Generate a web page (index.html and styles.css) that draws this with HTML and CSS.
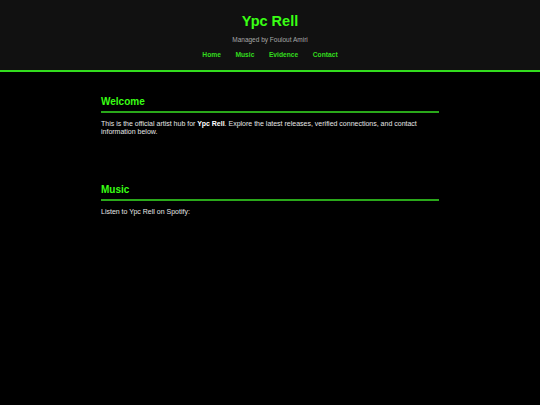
FILE: index.html
```html
<!DOCTYPE html>
<html lang="en">
<head>
<meta charset="utf-8">
<title>Ypc Rell</title>
<link rel="stylesheet" href="styles.css">
</head>
<body>
<header class="site-header">
  <h1 class="site-title">Ypc Rell</h1>
  <p class="site-sub">Managed by Foulout Amiri</p>
  <nav class="site-nav">
    <a href="#home">Home</a>
    <a href="#music">Music</a>
    <a href="#evidence">Evidence</a>
    <a href="#contact">Contact</a>
  </nav>
</header>
<main class="content">
  <section class="block block-welcome" id="home">
    <h2 class="block-title">Welcome</h2>
    <p class="block-text">This is the official artist hub for <strong>Ypc Rell</strong>. Explore the latest releases, verified connections, and contact information below.</p>
  </section>
  <section class="block" id="music">
    <h2 class="block-title">Music</h2>
    <p class="block-text">Listen to Ypc Rell on Spotify:</p>
  </section>
</main>
</body>
</html>
```
FILE: styles.css
```css
html, body {
  margin: 0;
  padding: 0;
  background: #000;
}
body {
  font-family: "Liberation Sans", Arial, sans-serif;
  color: #e6e6e6;
  min-height: 405px;
}
.site-header {
  background: #111111;
  border-bottom: 2px solid #33dd1e;
  text-align: center;
  padding: 12px 0 11px;
}
.site-title {
  margin: 0;
  font-size: 14.5px;
  line-height: 18px;
  font-weight: bold;
  color: #39ff14;
}
.site-sub {
  margin: 6px 0 0;
  font-size: 6.5px;
  line-height: 8px;
  color: #a8a8a8;
}
.site-nav {
  margin-top: 7px;
  display: flex;
  justify-content: center;
  gap: 14.5px;
  font-size: 6.7px;
  line-height: 8px;
}
.site-nav a {
  color: #33dd1e;
  font-weight: bold;
  text-decoration: none;
}
.content {
  width: 338px;
  margin: 0 auto;
  padding-top: 24px;
}
.block-welcome {
  margin-bottom: 48px;
}
.block-title {
  margin: 0;
  font-size: 10px;
  line-height: 12px;
  font-weight: bold;
  color: #39ff14;
  padding-bottom: 3px;
  border-bottom: 2px solid #2aa81a;
}
.block-text {
  margin: 7px 0 0;
  font-size: 7px;
  line-height: 8px;
  color: #e6e6e6;
}
.block-text strong {
  color: #fff;
}
```
